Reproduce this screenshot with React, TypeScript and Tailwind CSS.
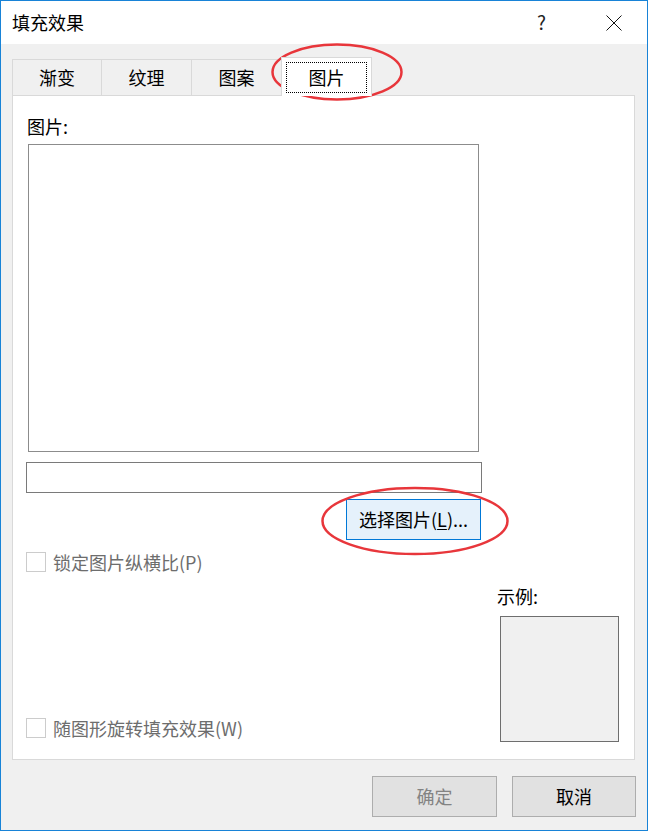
import React from 'react';

const font = "font-['Noto_Sans_CJK_SC','Microsoft_YaHei',sans-serif]";

function Tab({ label, first }: { label: string; first?: boolean }) {
  return (
    <div
      className={`h-[36px] w-[90px] flex items-center justify-center border-t border-r border-[#d9d9d9] text-[18px] text-black ${
        first ? 'border-l w-[89px]' : ''
      }`}
    >
      {label}
    </div>
  );
}

function CheckRow({ label }: { label: string }) {
  return (
    <div className="flex items-center h-[20px]">
      <div className="w-[20px] h-[20px] border border-[#cccccc] bg-white" />
      <span className="ml-[7px] text-[18px] leading-[20px] text-[#6d6d6d]">{label}</span>
    </div>
  );
}

export default function App() {
  return (
    <div className={`relative w-[648px] h-[831px] border border-[#1883d7] flex flex-col bg-[#f0f0f0] ${font}`}>
      {/* title bar */}
      <div className="h-[43px] bg-white flex items-center shrink-0">
        <span className="ml-[11px] text-[18px] text-black">填充效果</span>
        <span className="ml-auto text-[19px] text-[#222] mr-[60px]">?</span>
        <svg width="16" height="16" viewBox="0 0 16 16" className="mr-[25px]">
          <path d="M0.5 0.5 L15.5 15.5 M15.5 0.5 L0.5 15.5" stroke="#111" strokeWidth="1" />
        </svg>
      </div>

      <div className="flex-1 flex flex-col pl-[11px] pr-[12px] pt-[13px]">
        {/* tabs */}
        <div className="flex items-end h-[38px]">
          <Tab label="渐变" first />
          <Tab label="纹理" />
          <Tab label="图案" />
          <div className="relative z-10 -ml-px h-[39px] w-[91px] -mb-px bg-white border-t border-x border-[#d9d9d9] px-[4px] pt-[4px] pb-[3px]">
            <div className="h-full border border-dotted border-black flex items-center justify-center text-[18px] text-black">
              图片
            </div>
          </div>
        </div>

        {/* panel */}
        <div className="w-[623px] h-[665px] bg-white border border-[#d9d9d9] flex flex-col">
          <div className="mt-[18px] ml-[14px] text-[18px] leading-[24px] text-black">图片:</div>
          <div className="mt-[6px] ml-[15px] w-[451px] h-[308px] border border-[#8c8c8c] bg-white" />
          <div className="mt-[10px] ml-[13px] w-[456px] h-[31px] border border-[#7a7a7a] bg-white" />
          <div className="mt-[6px] ml-[333px] w-[135px] h-[41px] border border-[#0078d7] bg-[#e5f1fb] flex items-center justify-center text-[18px] text-black">
            <span>
              选择图片(<span className="underline underline-offset-2">L</span>)...
            </span>
          </div>
          <div className="mt-[12px] ml-[13px]">
            <CheckRow label="锁定图片纵横比(P)" />
          </div>
          <div className="mt-[12px] flex items-end flex-1 pb-[17px]">
            <div className="ml-[13px] mb-[4px] w-[471px]">
              <CheckRow label="随图形旋转填充效果(W)" />
            </div>
            <div className="flex flex-col">
              <div className="text-[18px] leading-[24px] text-black">示例:</div>
              <div className="mt-[8px] ml-[3px] w-[119px] h-[126px] border border-[#6e6e6e] bg-[#f0f0f0]" />
            </div>
          </div>
        </div>

        {/* buttons */}
        <div className="mt-[16px] flex justify-end gap-[15px] -mr-px">
          <div className="w-[125px] h-[41px] border border-[#adadad] bg-[#e1e1e1] flex items-center justify-center text-[18px] text-[#838383]">
            确定
          </div>
          <div className="w-[124px] h-[41px] border border-[#adadad] bg-[#e1e1e1] flex items-center justify-center text-[18px] text-black">
            取消
          </div>
        </div>
      </div>

      {/* red annotation ellipses */}
      <svg className="absolute -left-px -top-px pointer-events-none" width="648" height="831" viewBox="0 0 648 831">
        <ellipse cx="337" cy="72" rx="64.5" ry="27.5" fill="none" stroke="#e8363b" strokeWidth="2.5" />
        <ellipse cx="415" cy="521" rx="92.5" ry="33" fill="none" stroke="#e8363b" strokeWidth="2.5" />
      </svg>
    </div>
  );
}
